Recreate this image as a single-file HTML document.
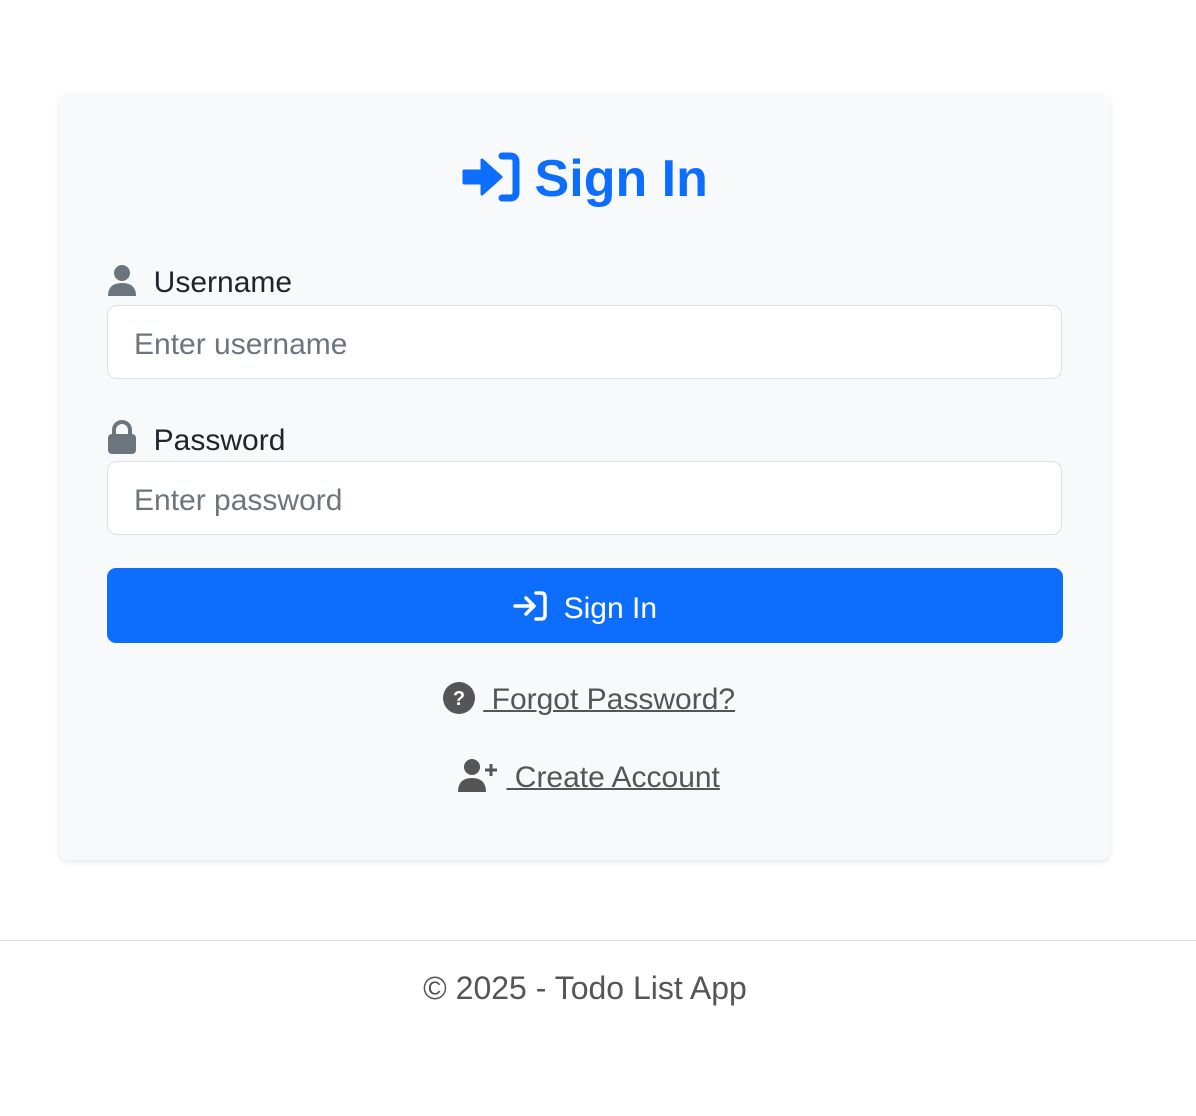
<!DOCTYPE html>
<html><head><style>
body{margin:0;background:#fff;font-family:"Liberation Sans",sans-serif;width:1196px;height:1116px;position:relative;overflow:hidden}
.card{position:absolute;left:59px;top:94px;width:1051px;height:766px;background:#f8f9fa;border-radius:9px;box-shadow:0 2px 6px rgba(0,0,0,.1)}
.abs{position:absolute}
h1{position:absolute;left:0;right:26px;top:147px;margin:0;text-align:center;color:#0d6efd;font-size:52px;font-weight:bold;line-height:64px}
.lbl{position:absolute;left:107px;font-size:30px;color:#212529;line-height:36px}
.inp{position:absolute;left:107px;width:953px;height:72px;border:1.5px solid #dee2e6;border-radius:10px;background:#fff;font-size:30px;color:#6c757d;line-height:78px;box-sizing:content-box}
.inp span{margin-left:26px}
.btn{position:absolute;left:107px;top:568px;width:956px;height:75px;background:#0d6efd;border-radius:9px;color:#fff;font-size:30px;text-align:center;line-height:81px}
.lnk{position:absolute;left:0;right:18px;text-align:center;font-size:30px;color:#555;line-height:36px}
.lnk u{text-decoration:underline;text-decoration-thickness:2px}
svg{vertical-align:middle}
</style></head><body>
<div class="card"></div>
<h1><svg width="58" height="50" viewBox="0 0 58 50" style="vertical-align:-6px"><path d="M2 19h18V8l19 17-19 17V31H2z" fill="#0d6efd" stroke="#0d6efd" stroke-width="3" stroke-linejoin="round"/><path d="M40 4h8q6 0 6 6v30q0 6-6 6h-8" fill="none" stroke="#0d6efd" stroke-width="7" stroke-linecap="round"/></svg> Sign In</h1>
<div class="lbl" style="top:264px"><svg width="30" height="32" viewBox="0 0 30 32" style="vertical-align:-4px"><circle cx="15" cy="9" r="8" fill="#6c757d"/><path d="M1 32q0-13 14-13t14 13z" fill="#6c757d"/></svg>&nbsp;&nbsp;Username</div>
<div class="inp" style="top:305px"><span>Enter username</span></div>
<div class="lbl" style="top:420px"><svg width="30" height="34" viewBox="0 0 30 34" style="vertical-align:-4px"><path d="M7 15v-5a8 8 0 0 1 16 0v5" fill="none" stroke="#6c757d" stroke-width="4"/><rect x="1" y="14" width="28" height="20" rx="4" fill="#6c757d"/></svg>&nbsp;&nbsp;Password</div>
<div class="inp" style="top:461px"><span>Enter password</span></div>
<div class="btn"><svg width="34" height="30" viewBox="0 0 34 30" style="vertical-align:-3px"><path d="M2 15h18M13 7l8 8-8 8" fill="none" stroke="#fff" stroke-width="3.5" stroke-linecap="round" stroke-linejoin="round"/><path d="M23 2h5q4 0 4 4v18q0 4-4 4h-5" fill="none" stroke="#fff" stroke-width="3.5" stroke-linecap="round"/></svg>&nbsp; Sign In</div>
<div class="lnk" style="top:682px"><svg width="32" height="32" viewBox="0 0 32 32" style="vertical-align:-5px"><circle cx="16" cy="16" r="16" fill="#555"/><text x="16" y="23" font-size="20" font-weight="bold" fill="#fff" text-anchor="middle" font-family="Liberation Sans">?</text></svg> <u>&nbsp;Forgot Password?</u></div>
<div class="lnk" style="top:758px"><svg width="40" height="34" viewBox="0 0 40 34" style="vertical-align:-5px"><circle cx="14" cy="9" r="8" fill="#555"/><path d="M0 34q0-14 14-14t14 14z" fill="#555"/><path d="M33 6v12M27 12h12" stroke="#555" stroke-width="3"/></svg> <u>&nbsp;Create Account</u></div>
<div class="abs" style="left:0;right:0;top:940px;border-top:1.5px solid #dee2e6"></div>
<div class="lnk" style="top:970px;right:26px;font-size:32px">© 2025 - Todo List App</div>
</body></html>
